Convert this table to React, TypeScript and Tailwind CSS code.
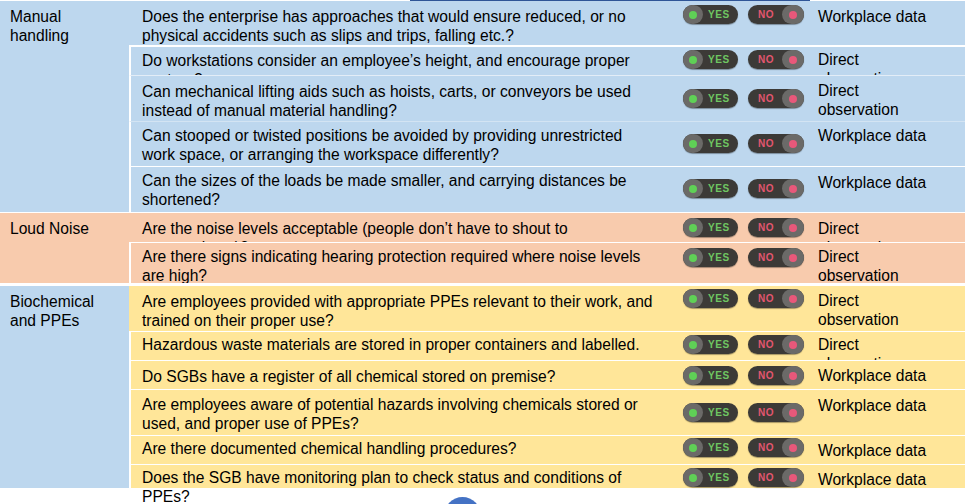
type Row = {
  q: string;
  src: string;
  h: string;
  line: string;
  qPad: string;
  tPad: string;
  sPad: string;
  open?: boolean;
};

type Section = {
  title: string;
  catBg: string;
  rowBg: string;
  catPad: string;
  gap: string;
  rows: Row[];
};

const sections: Section[] = [
  {
    title: "Manual handling",
    catBg: "bg-[#bdd7ee]",
    rowBg: "bg-[#bdd7ee]",
    catPad: "pt-[7px]",
    gap: "mt-0",
    rows: [
      {
        q: "Does the enterprise has approaches that would ensure reduced, or no physical accidents such as slips and trips, falling etc.?",
        src: "Workplace data",
        h: "h-[44px]",
        line: "border-l-transparent",
        qPad: "pt-[7px]",
        tPad: "pt-[4px]",
        sPad: "pt-[7px]",
      },
      {
        q: "Do workstations consider an employee’s height, and encourage proper posture?",
        src: "Direct observation",
        h: "h-[30px]",
        line: "border-t-2 border-white",
        qPad: "pt-[5px]",
        tPad: "pt-[3px]",
        sPad: "pt-[4px]",
      },
      {
        q: "Can mechanical lifting aids such as hoists, carts, or conveyors be used instead of manual material handling?",
        src: "Direct observation",
        h: "h-[46px]",
        line: "border-t border-t-[#e3edf7] border-l-white",
        qPad: "pt-[7px]",
        tPad: "pt-[13px]",
        sPad: "pt-[6px]",
      },
      {
        q: "Can stooped or twisted positions be avoided by providing unrestricted work space, or arranging the workspace differently?",
        src: "Workplace data",
        h: "h-[45px]",
        line: "border-t border-t-[#d3e4f3] border-l-white",
        qPad: "pt-[5px]",
        tPad: "pt-[12px]",
        sPad: "pt-[5px]",
      },
      {
        q: "Can the sizes of the loads be made smaller, and carrying distances be shortened?",
        src: "Workplace data",
        h: "h-[46px]",
        line: "border-t border-white",
        qPad: "pt-[5px]",
        tPad: "pt-[12px]",
        sPad: "pt-[7px]",
      },
    ],
  },
  {
    title: "Loud Noise",
    catBg: "bg-[#f8cbad]",
    rowBg: "bg-[#f8cbad]",
    catPad: "pt-[7px]",
    gap: "mt-[1px]",
    rows: [
      {
        q: "Are the noise levels acceptable (people don’t have to shout to communicate)?",
        src: "Direct observation",
        h: "h-[29px]",
        line: "border-l-transparent",
        qPad: "pt-[7px]",
        tPad: "pt-[5px]",
        sPad: "pt-[7px]",
      },
      {
        q: "Are there signs indicating hearing protection required where noise levels are high?",
        src: "Direct observation",
        h: "h-[41px]",
        line: "border-t border-white",
        qPad: "pt-[5px]",
        tPad: "pt-[5px]",
        sPad: "pt-[5px]",
      },
    ],
  },
  {
    title: "Biochemical and PPEs",
    catBg: "bg-[#bdd7ee]",
    rowBg: "bg-[#ffe699]",
    catPad: "pt-[7px]",
    gap: "mt-[3px]",
    rows: [
      {
        q: "Are employees provided with appropriate PPEs relevant to their work, and trained on their proper use?",
        src: "Direct observation",
        h: "h-[45px]",
        line: "border-l-transparent",
        qPad: "pt-[7px]",
        tPad: "pt-[3px]",
        sPad: "pt-[6px]",
      },
      {
        q: "Hazardous waste materials are stored in proper containers and labelled.",
        src: "Direct observation",
        h: "h-[29px]",
        line: "border-t border-white",
        qPad: "pt-[4px]",
        tPad: "pt-[3px]",
        sPad: "pt-[4px]",
      },
      {
        q: "Do SGBs have a register of all chemical stored on premise?",
        src: "Workplace data",
        h: "h-[29px]",
        line: "border-t border-white",
        qPad: "pt-[7px]",
        tPad: "pt-[5px]",
        sPad: "pt-[6px]",
      },
      {
        q: "Are employees aware of potential hazards involving chemicals stored or used, and proper use of PPEs?",
        src: "Workplace data",
        h: "h-[46px]",
        line: "border-t border-white",
        qPad: "pt-[6px]",
        tPad: "pt-[13px]",
        sPad: "pt-[7px]",
      },
      {
        q: "Are there documented chemical handling procedures?",
        src: "Workplace data",
        h: "h-[29px]",
        line: "border-t border-white",
        qPad: "pt-[4px]",
        tPad: "pt-[2px]",
        sPad: "pt-[6px]",
      },
      {
        q: "Does the SGB have monitoring plan to check status and conditions of PPEs?",
        src: "Workplace data",
        h: "h-[24px]",
        line: "border-t border-white",
        qPad: "pt-[4px]",
        tPad: "pt-[3px]",
        sPad: "pt-[6px]",
        open: true,
      },
    ],
  },
];

function YesToggle() {
  return (
    <div className="flex h-[19px] w-[55px] shrink-0 items-center rounded-full bg-[#3c3a37] shadow-[0_1px_1px_rgba(0,0,0,0.35)]">
      <span className="flex h-[19px] w-[20px] items-center justify-center rounded-full bg-[#6b6a68]">
        <span className="h-[8px] w-[8px] rounded-full bg-[#5fd056]" />
      </span>
      <span className="ml-[5px] text-[10px] leading-none font-black tracking-[0.6px] text-[#6fc662]">
        YES
      </span>
    </div>
  );
}

function NoToggle() {
  return (
    <div className="flex h-[19px] w-[56px] shrink-0 items-center rounded-full bg-[#3c3a37] shadow-[0_1px_1px_rgba(0,0,0,0.35)]">
      <span className="ml-[10px] text-[10px] leading-none font-black tracking-[0.6px] text-[#e2566f]">
        NO
      </span>
      <span className="ml-auto flex h-[19px] w-[22px] items-center justify-center rounded-full bg-[#6b6a68]">
        <span className="h-[8px] w-[8px] rounded-full bg-[#e8587a]" />
      </span>
    </div>
  );
}

function QuestionRow({ row, bg }: { row: Row; bg: string }) {
  return (
    <div
      className={`flex border-l-2 ${bg} ${row.h} ${row.line} ${
        row.open ? "overflow-visible" : "overflow-hidden"
      } ${row.line.includes("transparent") ? "" : "border-l-white"}`}
    >
      <div className={`w-[552px] shrink-0 pl-[11px] pr-[27px] ${row.qPad}`}>{row.q}</div>
      <div className={`flex w-[135px] shrink-0 gap-[10px] ${row.tPad}`}>
        <YesToggle />
        <NoToggle />
      </div>
      <div className={`w-[125px] shrink-0 ${row.sPad}`}>{row.src}</div>
    </div>
  );
}

export default function App() {
  return (
    <div className="min-h-[504px] w-[965px] bg-white font-['Liberation_Sans',Arial,sans-serif] text-[15.6px] leading-[18.5px] text-black">
      <div className="flex h-[1px]">
        <div className="ml-[410px] w-[400px] bg-[#2f5597]" />
      </div>
      {sections.map((s) => (
        <div key={s.title} className={`flex ${s.gap}`}>
          <div className={`w-[129px] shrink-0 pl-[10px] pr-[19px] ${s.catBg} ${s.catPad}`}>
            {s.title}
          </div>
          <div className="flex flex-1 flex-col">
            {s.rows.map((r) => (
              <QuestionRow key={r.q} row={r} bg={s.rowBg} />
            ))}
          </div>
        </div>
      ))}
      <div className="ml-[444px] mt-[9px] h-[37px] w-[37px] rounded-full bg-[#4472c4]" />
    </div>
  );
}
